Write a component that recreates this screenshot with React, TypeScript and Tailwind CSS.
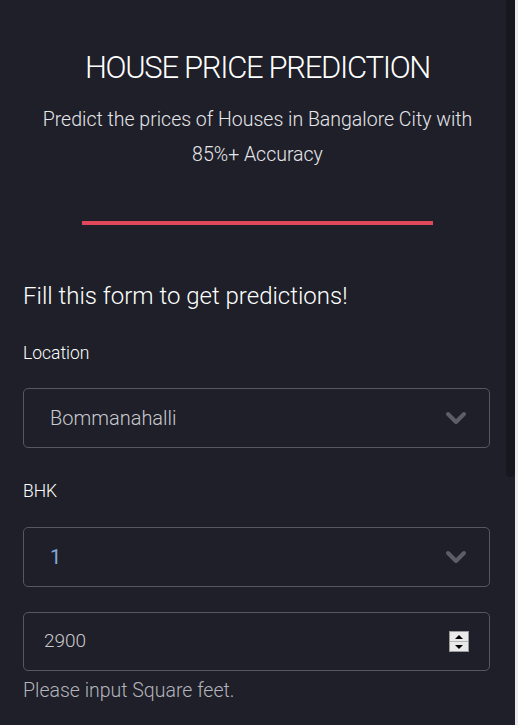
const font = { fontFamily: "Roboto, 'Liberation Sans', sans-serif" };

function Chevron() {
  return (
    <svg width="22" height="14" viewBox="0 0 22 14" className="mr-[22px]">
      <path d="M3 3 L11 11 L19 3" fill="none" stroke="#5c5d65" strokeWidth="4" strokeLinecap="round" strokeLinejoin="round" />
    </svg>
  );
}

function Spinner() {
  return (
    <div className="mr-[20px] flex h-[21px] w-[20px] flex-col border border-[#9a9a9a] bg-[#e9e9e9]">
      <div className="flex flex-1 items-center justify-center border-b border-[#b5b5b5]">
        <div className="h-0 w-0 border-x-[4px] border-b-[4px] border-x-transparent border-b-black" />
      </div>
      <div className="flex flex-1 items-center justify-center">
        <div className="h-0 w-0 border-x-[4px] border-t-[4px] border-x-transparent border-t-black" />
      </div>
    </div>
  );
}

export default function App() {
  return (
    <div className="flex h-[725px] w-[518px] overflow-hidden bg-[#1e1f28]" style={font}>
      <div className="relative w-[515px]">
        <div className="flex flex-col items-center pt-[48px]">
          <h1 className="text-[31px] font-light leading-[40px] tracking-[-1.3px] text-white">HOUSE PRICE PREDICTION</h1>
          <p className="mt-[14px] w-[440px] text-center text-[19.5px] font-light leading-[35px] text-[#e6e6ea]">
            Predict the prices of Houses in Bangalore City with 85%+ Accuracy
          </p>
          <div className="mt-[49px] h-[4px] w-[351px] bg-[#e0475b]" />
        </div>

        <div className="px-[23px] pr-[25px]">
          <h2 className="mt-[56px] text-[24px] font-light leading-[30px] text-white">Fill this form to get predictions!</h2>

          <label className="mt-[32px] block text-[17.5px] font-light leading-[20px] text-white">Location</label>
          <div className="mt-[25px] flex h-[60px] items-center justify-between rounded-[5px] border border-[#56575f]">
            <span className="pl-[26px] text-[20px] font-light text-[#c9c9cf]">Bommanahalli</span>
            <Chevron />
          </div>

          <label className="mt-[33px] block text-[17.5px] font-light leading-[20px] text-white">BHK</label>
          <div className="mt-[26px] flex h-[60px] items-center justify-between rounded-[5px] border border-[#56575f]">
            <span className="pl-[26px] text-[20px] text-[#85a9d6]">1</span>
            <Chevron />
          </div>

          <div className="mt-[25px] flex h-[59px] items-center justify-between rounded-[5px] border border-[#56575f]">
            <span className="pl-[20px] text-[19px] font-light text-[#c9c9cf]">2900</span>
            <Spinner />
          </div>
          <p className="mt-[5px] text-[19.5px] font-light text-[#b4b4bc]">Please input Square feet.</p>
        </div>

        <div className="absolute right-0 top-0 h-[477px] w-[9px] rounded-b-[4px] bg-[#17181f]" />
      </div>
      <div className="w-[3px] bg-[#ececec]" />
    </div>
  );
}
